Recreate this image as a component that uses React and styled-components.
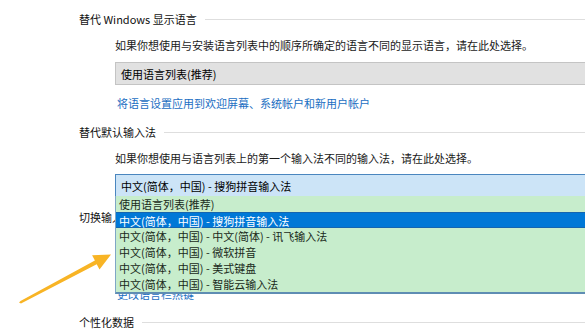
import React from 'react';
import styled, { createGlobalStyle } from 'styled-components';

const GlobalStyle = createGlobalStyle`
  html, body {
    margin: 0;
    padding: 0;
    background: #fff;
    overflow: hidden;
  }
  body {
    font-family: "Noto Sans CJK SC", "Noto Sans", sans-serif;
    font-size: 11px;
    color: #000;
  }
`;

const Page = styled.div`
  position: relative;
  width: 585px;
  height: 336px;
  overflow: hidden;
  padding: 11px 0 0 79px;
  box-sizing: border-box;
  display: flex;
  flex-direction: column;
`;

const SectionTitle = styled.div`
  display: flex;
  align-items: center;
  gap: 8px;
  height: 16px;
  line-height: 16px;
  margin-top: ${p => p.$gap || 0}px;
  white-space: nowrap;
  color: #111;

  &::after {
    content: '';
    flex: 1;
    height: 1px;
    background: #dedede;
  }
`;

const Indent = styled.div`
  margin-left: 36px;
  margin-top: ${p => p.$gap || 0}px;
`;

const Text = styled.div`
  height: 16px;
  line-height: 16px;
  white-space: nowrap;
  color: #1a1a1a;
`;

const Link = styled.div`
  height: 16px;
  line-height: 16px;
  padding-left: 2px;
  white-space: nowrap;
  color: #1b6ec2;
`;

const Combo = styled.div`
  position: relative;
  width: 490px;
  height: 23px;
  box-sizing: border-box;
  display: flex;
  align-items: center;
  padding-left: 5px;
  white-space: nowrap;
  background: ${p => (p.$focused ? '#cce4f7' : '#e1e1e1')};
  border: 1px solid ${p => (p.$focused ? '#4a86bf' : '#c4c4c4')};
  border-bottom-color: ${p => (p.$focused ? '#1f5f9f' : '#c4c4c4')};
`;

const DropList = styled.ul`
  position: absolute;
  top: 100%;
  left: -1px;
  width: 100%;
  margin: 0;
  padding: 0;
  list-style: none;
  background: #c7edcc;
  border-left: 1px solid #7fa6c6;
  border-bottom: 2px solid #5f8db3;
  z-index: 2;
`;

const Option = styled.li`
  height: 16px;
  line-height: 16px;
  padding-left: 3px;
  box-sizing: border-box;
  white-space: nowrap;
  color: ${p => (p.$selected ? '#fff' : '#1a2a1a')};
  background: ${p => (p.$selected ? '#0078d7' : 'transparent')};
  border-top: ${p => (p.$selected ? '1px solid #1565b0' : 'none')};
  border-bottom: ${p => (p.$selected ? '1px solid #1565b0' : 'none')};
`;

const Arrow = styled.svg`
  position: absolute;
  left: 15px;
  top: 248px;
  width: 100px;
  height: 58px;
  pointer-events: none;
  z-index: 3;
`;

const options = [
  '使用语言列表(推荐)',
  '中文(简体，中国) - 搜狗拼音输入法',
  '中文(简体，中国) - 中文(简体) - 讯飞输入法',
  '中文(简体，中国) - 微软拼音',
  '中文(简体，中国) - 美式键盘',
  '中文(简体，中国) - 智能云输入法',
];

export default function App() {
  return (
    <>
      <GlobalStyle />
      <Page>
        <SectionTitle>替代 Windows 显示语言</SectionTitle>
        <Indent $gap={10}>
          <Text>如果你想使用与安装语言列表中的顺序所确定的语言不同的显示语言，请在此处选择。</Text>
        </Indent>
        <Indent $gap={9}>
          <Combo>使用语言列表(推荐)</Combo>
        </Indent>
        <Indent $gap={10}>
          <Link>将语言设置应用到欢迎屏幕、系统帐户和新用户帐户</Link>
        </Indent>

        <SectionTitle $gap={13}>替代默认输入法</SectionTitle>
        <Indent $gap={10}>
          <Text>如果你想使用与语言列表上的第一个输入法不同的输入法，请在此处选择。</Text>
        </Indent>
        <Indent $gap={8}>
          <Combo $focused>
            中文(简体，中国) - 搜狗拼音输入法
            <DropList>
              {options.map((o, i) => (
                <Option key={o} $selected={i === 1}>{o}</Option>
              ))}
            </DropList>
          </Combo>
        </Indent>

        <SectionTitle $gap={12}>切换输入法</SectionTitle>
        <Indent $gap={61}>
          <Link>更改语言栏热键</Link>
        </Indent>

        <SectionTitle $gap={12}>个性化数据</SectionTitle>

        <Arrow viewBox="15 248 100 58">
          <polygon
            fill="#f8b425"
            points="19,302.5 20.5,301 94.9,260.6 92.1,255.3 111,254.5 99.5,269.5 96.7,264.2 21,303.5"
          />
        </Arrow>
      </Page>
    </>
  );
}
